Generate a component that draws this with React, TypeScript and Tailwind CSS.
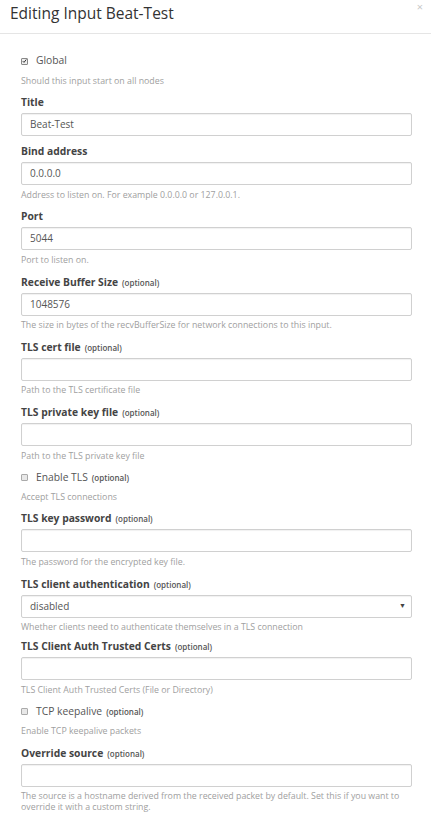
import React from 'react';

type Field = {
  kind: 'input' | 'select' | 'check';
  label: string;
  optional?: boolean;
  value?: string;
  help?: string[];
  checked?: boolean;
};

const fields: Field[] = [
  { kind: 'check', label: 'Global', checked: true, help: ['Should this input start on all nodes'] },
  { kind: 'input', label: 'Title', value: 'Beat-Test' },
  { kind: 'input', label: 'Bind address', value: '0.0.0.0', help: ['Address to listen on. For example 0.0.0.0 or 127.0.0.1.'] },
  { kind: 'input', label: 'Port', value: '5044', help: ['Port to listen on.'] },
  {
    kind: 'input',
    label: 'Receive Buffer Size',
    optional: true,
    value: '1048576',
    help: ['The size in bytes of the recvBufferSize for network connections to this input.'],
  },
  { kind: 'input', label: 'TLS cert file', optional: true, help: ['Path to the TLS certificate file'] },
  { kind: 'input', label: 'TLS private key file', optional: true, help: ['Path to the TLS private key file'] },
  { kind: 'check', label: 'Enable TLS', optional: true, help: ['Accept TLS connections'] },
  { kind: 'input', label: 'TLS key password', optional: true, help: ['The password for the encrypted key file.'] },
  {
    kind: 'select',
    label: 'TLS client authentication',
    optional: true,
    value: 'disabled',
    help: ['Whether clients need to authenticate themselves in a TLS connection'],
  },
  {
    kind: 'input',
    label: 'TLS Client Auth Trusted Certs',
    optional: true,
    help: ['TLS Client Auth Trusted Certs (File or Directory)'],
  },
  { kind: 'check', label: 'TCP keepalive', optional: true, help: ['Enable TCP keepalive packets'] },
  {
    kind: 'input',
    label: 'Override source',
    optional: true,
    help: [
      'The source is a hostname derived from the received packet by default. Set this if you want to',
      'override it with a custom string.',
    ],
  },
];

function Help({ lines }: { lines?: string[] }) {
  if (!lines) return null;
  return (
    <div className="mt-[4.5px] text-[8.8px] leading-[11px] text-[#a0a0a0]">
      {lines.map((l) => (
        <div key={l} className="whitespace-nowrap">
          {l}
        </div>
      ))}
    </div>
  );
}

function Optional() {
  return <span className="ml-[4px] text-[8px] font-semibold text-[#555]">(optional)</span>;
}

function CheckRow({ f }: { f: Field }) {
  return (
    <div className="mb-[8.5px]">
      <div className="flex h-[14px] items-center">
        <span
          className={
            f.checked
              ? 'flex h-[7px] w-[7px] items-center justify-center rounded-[1px] border border-[#888] bg-[#eee]'
              : 'h-[7px] w-[7px] rounded-[1px] border border-[#aaa] bg-[#e8e8e8]'
          }
        >
          {f.checked && (
            <svg viewBox="0 0 8 8" className="h-[6px] w-[6px]">
              <path d="M1.2 4.2 L3.2 6.2 L6.8 1.6" fill="none" stroke="#333" strokeWidth="1.6" />
            </svg>
          )}
        </span>
        <span className="ml-[8px] flex items-baseline">
          <span className="text-[10.3px] text-[#555]">{f.label}</span>
          {f.optional && <Optional />}
        </span>
      </div>
      <div className="pt-[3px]">
        <Help lines={f.help} />
      </div>
    </div>
  );
}

function InputRow({ f }: { f: Field }) {
  const mb = f.kind === 'select' ? 'mb-[6px]' : f.help ? 'mb-[8.8px]' : 'mb-[8px]';
  return (
    <div className={mb}>
      <div className="flex h-[14px] items-baseline leading-[14px]">
        <span className="text-[10.3px] font-bold text-[#444]">{f.label}</span>
        {f.optional && <Optional />}
      </div>
      <div className="mt-[4px] flex h-[23px] items-center rounded-[2px] border border-[#d0d0d0] bg-white pl-[8px] pr-[5px] text-[10px] text-[#555] shadow-[inset_0_1px_1px_rgba(0,0,0,0.06)]">
        <span className="flex-1">{f.value}</span>
        {f.kind === 'select' && <span className="text-[7px] text-[#444]">▼</span>}
      </div>
      <Help lines={f.help} />
    </div>
  );
}

export default function App() {
  return (
    <div className="min-h-screen w-[431px] bg-white" style={{ fontFamily: '"Open Sans", "Liberation Sans", sans-serif' }}>
      <div className="relative h-[34px] border-b border-[#e5e5e5] pl-[10px] pt-[2px]">
        <h1 className="text-[15.5px] leading-[22px] text-[#333]">Editing Input Beat-Test</h1>
        <span className="absolute right-[8px] top-[-1px] text-[11px] text-[#c8c8c8]">×</span>
      </div>
      <div className="pl-[21px] pr-[19px] pt-[20px]">
        {fields.map((f) =>
          f.kind === 'check' ? <CheckRow key={f.label} f={f} /> : <InputRow key={f.label} f={f} />
        )}
      </div>
    </div>
  );
}
